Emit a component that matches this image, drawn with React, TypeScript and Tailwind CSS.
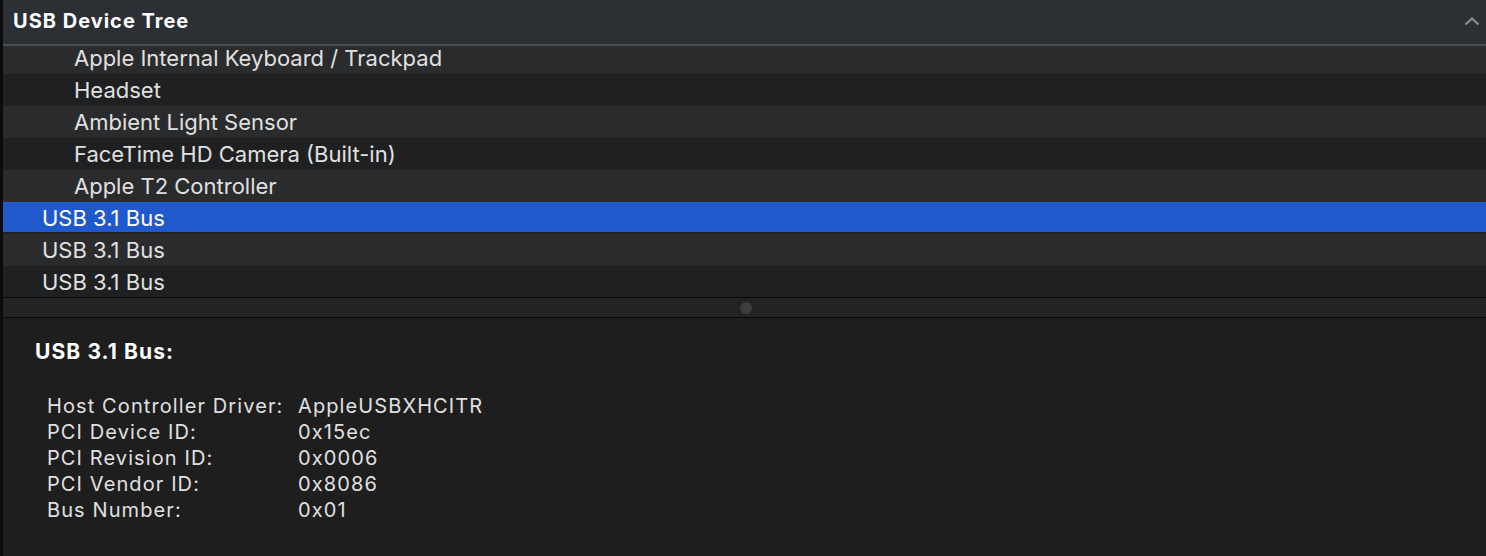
import React from "react";

const rows: { label: string; indent: boolean; selected?: boolean }[] = [
  { label: "Apple Internal Keyboard / Trackpad", indent: true },
  { label: "Headset", indent: true },
  { label: "Ambient Light Sensor", indent: true },
  { label: "FaceTime HD Camera (Built-in)", indent: true },
  { label: "Apple T2 Controller", indent: true },
  { label: "USB 3.1 Bus", indent: false, selected: true },
  { label: "USB 3.1 Bus", indent: false },
  { label: "USB 3.1 Bus", indent: false },
];

const details: [string, string][] = [
  ["Host Controller Driver:", "AppleUSBXHCITR"],
  ["PCI Device ID:", "0x15ec"],
  ["PCI Revision ID:", "0x0006"],
  ["PCI Vendor ID:", "0x8086"],
  ["Bus Number:", "0x01"],
];

export default function App() {
  return (
    <div
      className="w-[1486px] h-[556px] overflow-hidden flex flex-col border-l-[3px] border-[#0b0b0b] bg-[#1e1e1e] text-[#e0e0e0]"
      style={{ fontFamily: "Inter, 'Noto Sans', sans-serif" }}
    >
      {/* Header */}
      <div className="h-[44px] shrink-0 flex items-center justify-between pl-[10px] pr-[6px] pb-[3px] bg-[#2c2f33]">
        <span className="text-[20px] leading-[26px] font-bold text-white tracking-[1px]">USB Device Tree</span>
        <svg width="16" height="10" viewBox="0 0 16 10" className="mt-[1px]">
          <path d="M1.5 8.5 L8 2.5 L14.5 8.5" fill="none" stroke="#8b8e92" strokeWidth="2.2" />
        </svg>
      </div>
      <div className="h-[2px] shrink-0 bg-[#4a4c4f]" />

      {/* Tree list */}
      <div className="h-[251px] shrink-0 overflow-hidden">
        {rows.map((r, i) => (
          <div
            key={i}
            className={`${i === 0 ? "h-[28px]" : "h-[32px]"} ${
              i % 2 === 0 ? "bg-[#2a2b2d]" : "bg-[#1f2022]"
            }`}
          >
            <div
              className={`${i === 0 ? "h-[24px]" : "h-[30px] pt-[2px]"} flex items-center text-[22px] leading-[28px] ${
                r.indent ? "pl-[71px]" : "pl-[39px]"
              } ${r.selected ? "bg-[#2059cc] text-white" : ""}`}
            >
              {r.label}
            </div>
          </div>
        ))}
      </div>

      {/* Splitter */}
      <div className="h-[1px] shrink-0 bg-[#0a0a0a]" />
      <div className="h-[19px] shrink-0 bg-[#232323] flex items-center justify-center">
        <div className="w-[12px] h-[12px] rounded-full bg-[#3d3d3d] ml-[3px]" />
      </div>
      <div className="h-[1px] shrink-0 bg-[#0a0a0a]" />

      {/* Details */}
      <div className="flex-1 bg-[#1e1e1e] pl-[32px] pt-[21px]">
        <div className="text-[21px] leading-[26px] font-bold text-white tracking-[1.1px]">USB 3.1 Bus:</div>
        <div className="mt-[28px] pl-[12px] grid grid-cols-[251px_auto] text-[20px] leading-[26px] tracking-[1.1px]">
          {details.map(([k, v]) => (
            <React.Fragment key={k}>
              <div>{k}</div>
              <div>{v}</div>
            </React.Fragment>
          ))}
        </div>
      </div>
    </div>
  );
}
